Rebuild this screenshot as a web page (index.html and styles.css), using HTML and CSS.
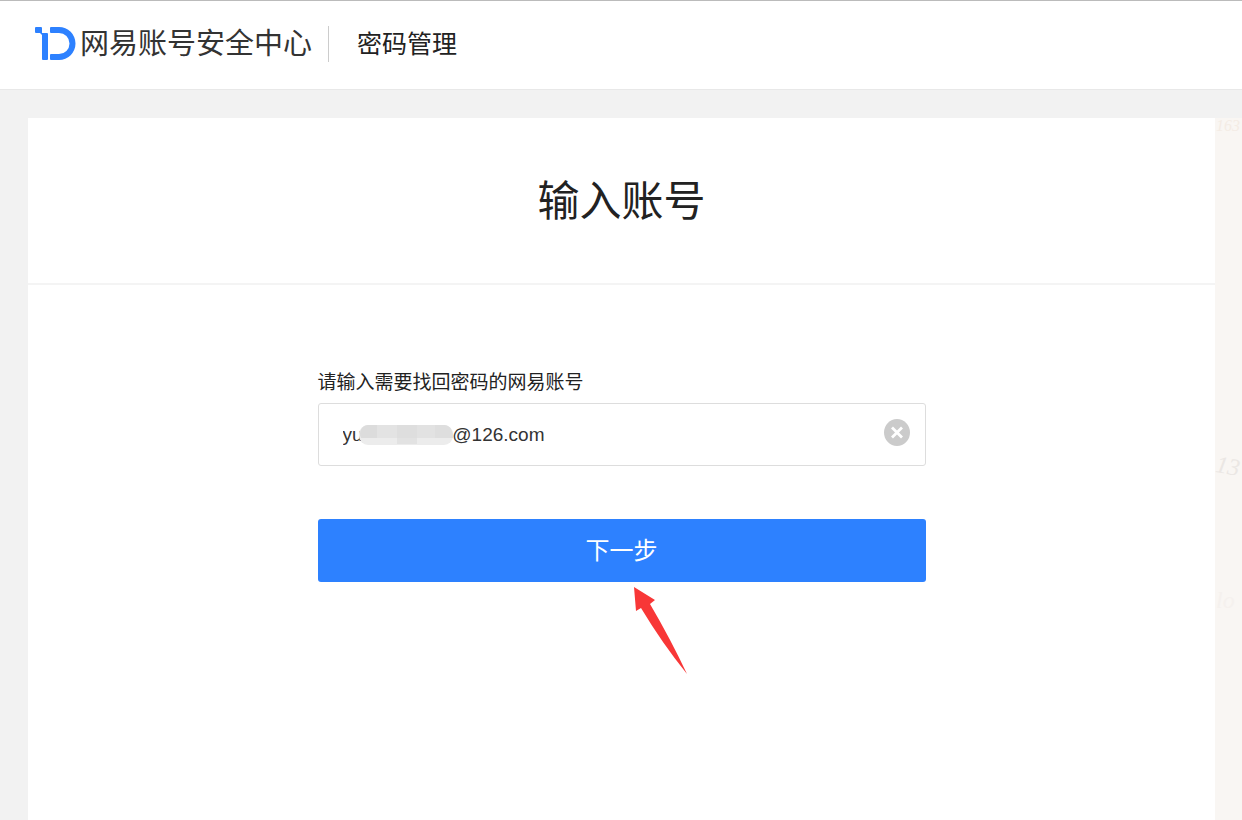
FILE: index.html
```html
<!DOCTYPE html>
<html lang="zh-CN">
<head>
  <meta charset="UTF-8">
  <meta name="viewport" content="width=device-width, initial-scale=1.0">
  <title>网易账号安全中心 - 密码管理</title>
  <link rel="stylesheet" href="styles.css">
</head>
<body>
  <header class="header">
    <a class="logo" href="#">
      <svg class="logo-icon" width="41" height="36" viewBox="0 0 41 36" aria-hidden="true">
        <path fill="#2d81ff" d="M1 1h5q1 0 1 1v5h5q1 0 1 1v25q0 1-1 1H8q-1 0-1-1V9L5 7H1Q0 7 0 6V2q0-1 1-1z"/>
        <path fill="#2d81ff" d="M16 1h8a16.500 16.500 0 0 1 0 33h-8q-1 0-1-1v-4q0-1 1-1h8a10.500 10.500 0 0 0 0-21h-8q-1 0-1-1V2q0-1 1-1z"/>
      </svg>
      <span class="logo-text">网易账号安全中心</span>
    </a>
    <span class="header-title">密码管理</span>
  </header>

  <div class="page">
    <main class="panel">
      <h1 class="panel-title">输入账号</h1>
      <form class="form" action="#">
        <label class="form-label" for="account">请输入需要找回密码的网易账号</label>
        <div class="field">
          <input class="field-input" type="text" id="account" name="account" value="yu                 @126.com">
          <svg class="field-mask" width="94" height="20" viewBox="0 0 94 20" aria-hidden="true">
            <rect width="94" height="20" rx="9" fill="#ececec"/>
            <path fill="#dcdcdc" d="M9 0h9v13H2C-1 7 3 0 9 0z"/>
            <path fill="#e3e3e3" d="M18 0h20v13H18z"/>
            <path fill="#dedede" d="M38 0h20v13H38zM76 0h9c6 0 9 5 9 13H76z"/>
            <path fill="#e2e2e2" d="M58 0h18v13H58zM38 13h20v6H38z"/>
          </svg>
          <button class="field-clear" type="button" aria-label="清空">
            <svg width="26" height="27" viewBox="0 0 26 27" aria-hidden="true">
              <ellipse cx="13" cy="13.5" rx="13" ry="13.5" fill="#cbcbcb"/>
              <path d="M8 8.500l10 10M18 8.500l-10 10" stroke="#fff" stroke-width="2.800"/>
            </svg>
          </button>
        </div>
        <div class="action">
          <button class="submit-btn" type="submit">下一步</button>
          <svg class="pointer" width="56" height="90" viewBox="0 0 56 90" aria-hidden="true">
            <path fill="#f83737" d="M0 1l21 13-5 4q20 34 37 70Q28 57 7 22l-5 3z"/>
          </svg>
        </div>
      </form>
    </main>
    <aside class="watermark" aria-hidden="true">
      <span class="mark mark-top">163</span>
      <span class="mark mark-middle">13</span>
      <span class="mark mark-bottom">lo</span>
    </aside>
  </div>

  <script>
    document.querySelector('.field-clear').addEventListener('click', function () {
      const input = document.getElementById('account');
      input.value = '';
      document.querySelector('.field-mask').style.display = 'none';
      input.focus();
    });
  </script>
</body>
</html>
```
FILE: styles.css
```css
* {
  box-sizing: border-box;
}
body {
  margin: 0;
  min-height: 100vh;
  display: flex;
  flex-direction: column;
  font-family: "Liberation Sans", "Noto Sans CJK SC", sans-serif;
  background: #f2f2f2;
  color: #222;
}
.header {
  display: flex;
  align-items: center;
  height: 90px;
  padding: 0 35px 2px;
  background: #fff;
  border-top: 1px solid #bbb;
  border-bottom: 1px solid #e8e8e8;
}
.logo {
  display: flex;
  align-items: center;
  gap: 4px;
  color: #333;
  text-decoration: none;
}
.logo-icon {
  display: block;
}
.logo-text {
  font-size: 29px;
  line-height: 36px;
}
.header-title {
  margin-left: 16px;
  padding-left: 28px;
  border-left: 1px solid #ccc;
  font-size: 25px;
  line-height: 36px;
}
.page {
  flex: 1;
  display: flex;
  padding: 28px 0 0 28px;
}
.panel {
  flex: 1;
  background: #fff;
}
.panel-title {
  margin: 0;
  padding: 53px 0 50px;
  border-bottom: 2px solid #f4f4f4;
  font-size: 42px;
  line-height: 62px;
  font-weight: 400;
  text-align: center;
}
.form {
  max-width: 608px;
  margin: 0 auto;
  padding: 84px 0 60px;
}
.form-label {
  display: block;
  margin-bottom: 6px;
  font-size: 19px;
  line-height: 28px;
}
.field {
  position: relative;
}
.field-input {
  display: block;
  width: 100%;
  height: 63px;
  padding: 0 60px 0 24px;
  border: 1px solid #ddd;
  border-radius: 3px;
  background: #fff;
  font-family: inherit;
  font-size: 19px;
  color: #333;
}
.field-input:focus {
  outline: none;
  border-color: #2d81ff;
}
/* covers the middle of the account name */
.field-mask {
  position: absolute;
  top: 22px;
  left: 41px;
  pointer-events: none;
}
.field-clear {
  position: absolute;
  top: 16px;
  right: 16px;
  padding: 0;
  border: none;
  background: none;
  cursor: pointer;
}
.field-clear svg {
  display: block;
}
.action {
  position: relative;
  margin-top: 53px;
}
.submit-btn {
  display: block;
  width: 100%;
  height: 63px;
  padding: 0 0 4px;
  border: none;
  border-radius: 3px;
  background: #2d81ff;
  color: #fff;
  font-family: inherit;
  font-size: 24px;
  cursor: pointer;
}
.pointer {
  position: absolute;
  top: 67px;
  left: 52%;
  pointer-events: none;
}
.watermark {
  position: relative;
  width: 27px;
  overflow: hidden;
  background: #f9f6f3;
}
.mark {
  position: absolute;
  left: 1px;
  font-family: "Liberation Serif", serif;
  font-size: 24px;
  line-height: 24px;
  font-style: italic;
}
.mark-top {
  top: -4px;
  font-size: 16px;
  color: #f4ece5;
}
.mark-middle {
  top: 336px;
  color: #ebe7e4;
  transform: rotate(10deg);
}
.mark-bottom {
  top: 470px;
  color: #f5f1ee;
}
```
